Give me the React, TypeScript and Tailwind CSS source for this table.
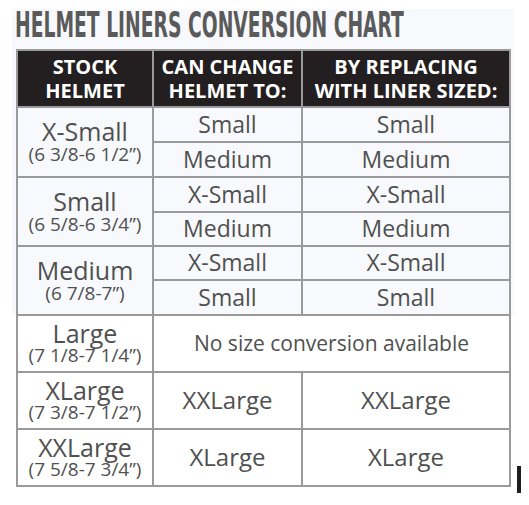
import React from "react";

const font = { fontFamily: '"Open Sans", "Liberation Sans", sans-serif' };

function Head({ a, b }: { a: string; b: string }) {
  return (
    <div className="bg-[#231f20] flex flex-col items-center justify-center text-white font-bold text-[20px] leading-[24px] pt-[1px]">
      <div>{a}</div>
      <div>{b}</div>
    </div>
  );
}

function Size({ name, range, bg }: { name: string; range: string; bg: string }) {
  return (
    <div className={`${bg} row-span-2 flex flex-col items-center justify-center text-[#505050] pb-[1px]`}>
      <div className="text-[25px] leading-[26px]">{name}</div>
      <div className="text-[19px] leading-[21px]">{range}</div>
    </div>
  );
}

function BigSize({ name, range }: { name: string; range: string }) {
  return (
    <div className="bg-white flex flex-col items-center justify-center text-[#505050]">
      <div className="text-[25px] leading-[23px]">{name}</div>
      <div className="text-[19px] leading-[20px]">{range}</div>
    </div>
  );
}

function Cell({ t, bg, big }: { t: string; bg: string; big?: boolean }) {
  return (
    <div className={`${bg} flex items-center justify-center text-[#505050] ${big ? "text-[24px]" : "text-[23px]"} leading-none pb-[1px]`}>
      {t}
    </div>
  );
}

export default function App() {
  const L = "bg-[#f7f9fc]";
  const W = "bg-white";
  return (
    <div className="relative w-[529px] h-[505px] bg-white overflow-hidden" style={font}>
      <div className="ml-[12px] mt-[9px] w-[502px] bg-[linear-gradient(to_bottom,#f7f9fc_306px,#ffffff_306px)]">
        <div className="h-[40px] pl-[3px] overflow-visible whitespace-nowrap">
          <span
            className="inline-block origin-left scale-x-[0.595] text-[35px] leading-[33px] font-bold text-[#5a5a5a]"
            style={{ fontFamily: '"DejaVu Sans Condensed", "DejaVu Sans", sans-serif' }}
          >
            HELMET LINERS CONVERSION CHART
          </span>
        </div>
        <div className="ml-[4px] w-[495px] grid grid-cols-[134px_147px_206px] grid-rows-[55px_33px_33px_33px_32px_32px_33px_55px_55px_55px] gap-[2px] p-[2px] bg-[#9a9a9a]">
          <Head a="STOCK" b="HELMET" />
          <Head a="CAN CHANGE" b="HELMET TO:" />
          <Head a="BY REPLACING" b="WITH LINER SIZED:" />

          <Size name="X-Small" range="(6 3/8-6 1/2”)" bg={L} />
          <Cell t="Small" bg={L} />
          <Cell t="Small" bg={L} />
          <Cell t="Medium" bg={L} />
          <Cell t="Medium" bg={L} />

          <Size name="Small" range="(6 5/8-6 3/4”)" bg={L} />
          <Cell t="X-Small" bg={L} />
          <Cell t="X-Small" bg={L} />
          <Cell t="Medium" bg={L} />
          <Cell t="Medium" bg={L} />

          <Size name="Medium" range="(6 7/8-7”)" bg={L} />
          <Cell t="X-Small" bg={L} />
          <Cell t="X-Small" bg={L} />
          <Cell t="Small" bg={L} />
          <Cell t="Small" bg={L} />

          <BigSize name="Large" range="(7 1/8-7 1/4”)" />
          <div className={`${W} col-span-2 flex items-center justify-center text-[#505050] text-[21px] leading-none`}>
            No size conversion available
          </div>

          <BigSize name="XLarge" range="(7 3/8-7 1/2”)" />
          <Cell t="XXLarge" bg={W} big />
          <Cell t="XXLarge" bg={W} big />

          <BigSize name="XXLarge" range="(7 5/8-7 3/4”)" />
          <Cell t="XLarge" bg={W} big />
          <Cell t="XLarge" bg={W} big />
        </div>
      </div>
      <div className="absolute left-[517px] top-[466px] w-[4px] h-[27px] bg-[#1e1e1e]" />
    </div>
  );
}
